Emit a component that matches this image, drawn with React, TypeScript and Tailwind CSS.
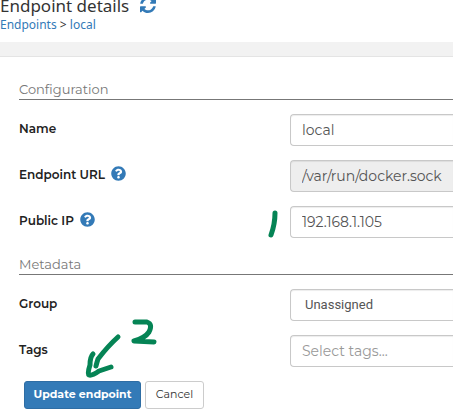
import type { ReactNode } from "react";
import { FaQuestionCircle } from "react-icons/fa";

const montserrat = "font-['Montserrat','Noto_Sans',sans-serif]";
const control =
  "h-8 min-w-0 flex-1 rounded-l border border-r-0 border-[#c8c8c8] px-[11px] text-[#555] shadow-[inset_0_1px_1px_rgba(0,0,0,0.075)] outline-none placeholder:text-[#999]";

function RefreshIcon() {
  return (
    <svg viewBox="0 0 1536 1536" className="size-4" fill="currentColor" aria-hidden="true">
      <path d="M1511 928q0 5-1 7-64 268-268 434.500t-478 166.500q-146 0-282.500-55t-243.500-157l-129 129q-19 19-45 19t-45-19-19-45v-448q0-26 19-45t45-19h448q26 0 45 19t19 45-19 45l-137 137q71 66 161 102t187 36q134 0 250-65t186-179q11-17 53-117 8-23 30-23h192q13 0 22.500 9.500t9.500 22.500zm25-800v448q0 26-19 45t-45 19h-448q-26 0-45-19t-19-45 19-45l138-138q-148-137-349-137-134 0-250 65t-186 179q-11 17-53 117-8 23-30 23h-199q-13 0-22.500-9.500t-9.500-22.500v-7q65-268 270-434.500t480-166.500q146 0 284 55.500t245 156.500l130-129q19-19 45-19t45 19 19 45z" />
    </svg>
  );
}

function Section({ title, children }: { title: string; children: ReactNode }) {
  return (
    <section className="flex flex-col">
      <h2 className="mb-3.5 h-5 border-b border-[#777] text-[13px] leading-[18px] text-[#777]">{title}</h2>
      <div className="flex flex-col gap-3.5">{children}</div>
    </section>
  );
}

function Row({ id, label, help, children }: { id: string; label: string; help?: boolean; children: ReactNode }) {
  return (
    <div className="flex">
      <div className="flex w-[271px] shrink-0 items-start gap-1.5 pt-[7px]">
        <label htmlFor={id} className="text-xs leading-4 font-semibold text-[#222]">
          {label}
        </label>
        {help && <FaQuestionCircle className="-mt-px size-[15px] text-[#337ab7]" />}
      </div>
      {children}
    </div>
  );
}

export default function App() {
  return (
    <div className={`relative overflow-hidden bg-white text-[#333] ${montserrat}`}>
      <header className="h-[42px] font-['Noto_Sans',sans-serif]">
        <div className="flex h-4 items-start gap-[11px]">
          <h1 className="text-[17px] leading-3">Endpoint details</h1>
          <button type="button" aria-label="Refresh" className="-mt-[3px] text-[#337ab7]">
            <RefreshIcon />
          </button>
        </div>
        <nav className="text-xs leading-[17px]">
          <a href="#endpoints" className="text-[#337ab7]">Endpoints</a>
          {" > "}
          <a href="#local" className="text-[#337ab7]">local</a>
        </nav>
      </header>
      <div className="h-[15px] border-b border-[#e4e4e4] bg-[#f2f2f2]" />
      <form className="flex flex-col pt-[23px] pl-[19px]" onSubmit={(e) => e.preventDefault()}>
        <div className="flex flex-col gap-[17px]">
          <Section title="Configuration">
            <Row id="name" label="Name">
              <input id="name" defaultValue="local" className={`${control} bg-white text-sm`} />
            </Row>
            <Row id="url" label="Endpoint URL" help>
              <input id="url" disabled defaultValue="/var/run/docker.sock" className={`${control} bg-[#eee] text-sm`} />
            </Row>
            <Row id="ip" label="Public IP" help>
              <input id="ip" defaultValue="192.168.1.105" className={`${control} bg-white text-sm`} />
            </Row>
          </Section>
          <Section title="Metadata">
            <Row id="group" label="Group">
              <select id="group" className={`${control} appearance-none bg-white pl-3.5 font-['Roboto',sans-serif] text-[13px]`}>
                <option>Unassigned</option>
              </select>
            </Row>
            <Row id="tags" label="Tags">
              <input id="tags" placeholder="Select tags..." className={`${control} bg-white text-sm`} />
            </Row>
          </Section>
        </div>
        <div className="mt-3.5 mb-2 ml-[5px] flex gap-1">
          <button type="submit" className="h-7 w-[117px] rounded-[3px] border border-[#2e6da4] bg-[#337ab7] pb-0.5 text-[11px] font-bold text-white">
            Update endpoint
          </button>
          <button type="button" className="h-7 w-[59px] rounded-[3px] border border-[#ccc] bg-white pb-0.5 text-[11px] text-[#333]">
            Cancel
          </button>
        </div>
      </form>
      {/* Green pen marks for the order of the steps */}
      <svg
        viewBox="0 0 453 417"
        className="pointer-events-none absolute top-0 left-0 h-[417px] w-[453px]"
        fill="none"
        stroke="#058455"
        strokeWidth="5"
        strokeLinecap="round"
        strokeLinejoin="round"
        aria-hidden="true"
      >
        <path d="M275 213 Q275 224 271 235" />
        <path d="M135 322 L147 322 Q153 324 149 332 Q145 338 134 341 L154 342" />
        <path d="M118 337 Q108 346 98 359 Q97 362 96 366" />
        <path d="M93 354 Q90 357 90 365 Q87 374 89 375 Q92 376 99 371 L111 367" />
      </svg>
    </div>
  );
}
